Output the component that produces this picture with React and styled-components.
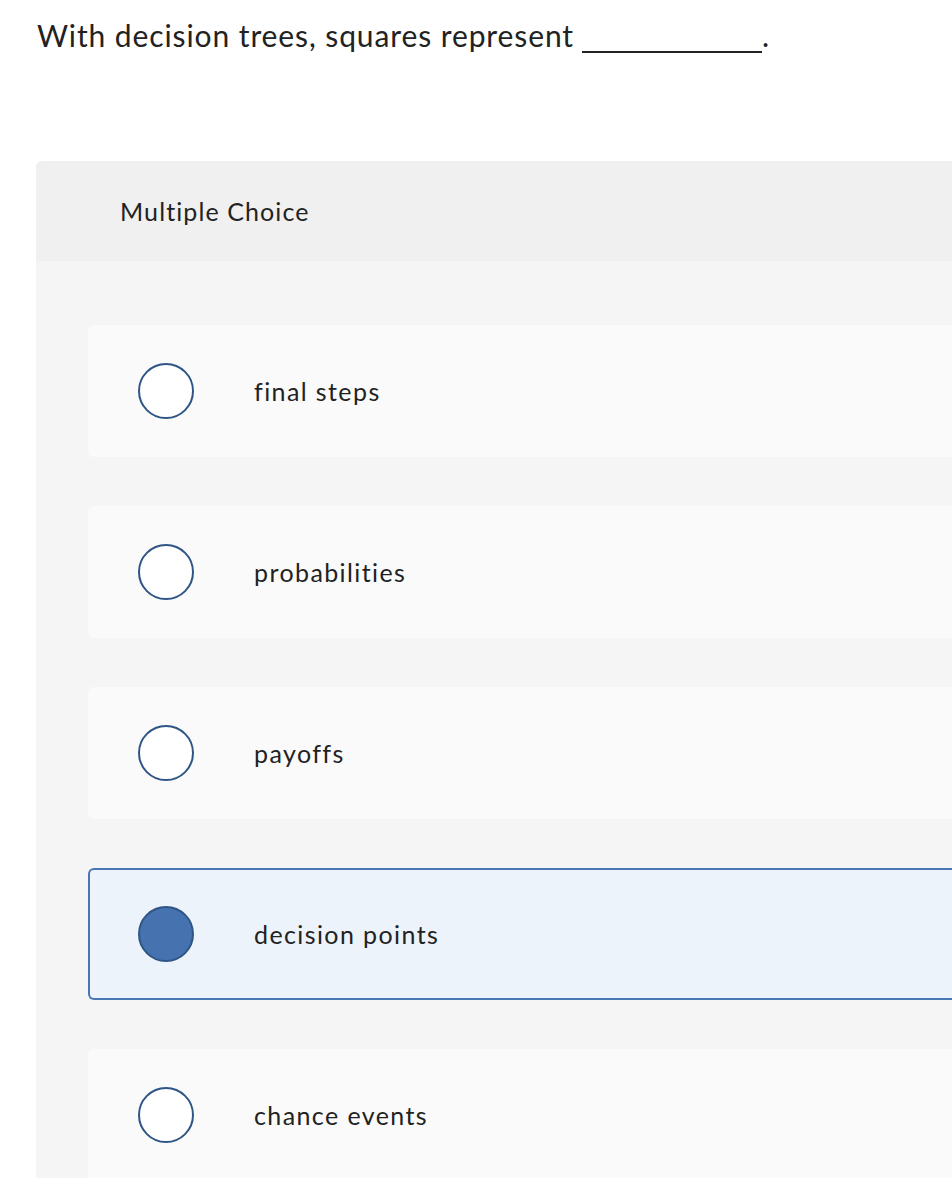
import React from 'react';
import styled, { createGlobalStyle } from 'styled-components';

const GlobalStyle = createGlobalStyle`
    html, body {
        margin: 0;
        padding: 0;
        background: #ffffff;
        overflow-x: hidden;
    }
    body {
        font-family: Lato, "Open Sans", Arial, sans-serif;
        font-variant-ligatures: none;
        color: #222222;
    }
`

const Page = styled.div`
    padding: 15px 0 0 36px;
    width: 1000px;
`

const Question = styled.p`
    margin: 0 0 0 1px;
    font-size: 30px;
    line-height: 40px;
    letter-spacing: 0.9px;
`

const Blank = styled.span`
    display: inline-block;
    width: 180px;
    height: 28px;
    border-bottom: 2px solid #222222;
    margin-left: 8px;
    vertical-align: -6px;
`

const Panel = styled.section`
    margin-top: 106px;
    border-radius: 6px 0 0 0;
    overflow: hidden;
    background: #f5f5f5;
`

const PanelHeader = styled.div`
    height: 100px;
    background: #f0f0f0;
    display: flex;
    align-items: center;
    padding-left: 84px;
    font-size: 25px;
    letter-spacing: 1.1px;
`

const OptionList = styled.div`
    padding: 64px 0 0 52px;
    display: flex;
    flex-direction: column;
    gap: 49px;
`

const Option = styled.label`
    display: flex;
    align-items: center;
    height: 132px;
    box-sizing: border-box;
    border-radius: 6px 0 0 6px;
    background: ${p => (p.$selected ? '#ecf3fb' : '#fafafa')};
    border: 2px solid ${p => (p.$selected ? '#4a77b4' : 'transparent')};
    border-right: none;
    padding-left: 48px;
    cursor: pointer;
`

const Radio = styled.span`
    width: 56px;
    height: 56px;
    box-sizing: border-box;
    border-radius: 50%;
    border: 2px solid #2e5585;
    background: ${p => (p.$selected ? '#4672b0' : '#ffffff')};
    flex-shrink: 0;
`

const OptionText = styled.span`
    margin-left: 60px;
    font-size: 25px;
    letter-spacing: 1.4px;
`

const options = ['final steps', 'probabilities', 'payoffs', 'decision points', 'chance events'];

const App = () => {
    const selected = 3;
    return (
        <Page>
            <GlobalStyle />
            <Question>
                With decision trees, squares represent<Blank />.
            </Question>
            <Panel>
                <PanelHeader>Multiple Choice</PanelHeader>
                <OptionList>
                    {options.map((opt, i) => (
                        <Option key={opt} $selected={i === selected}>
                            <Radio $selected={i === selected} />
                            <OptionText>{opt}</OptionText>
                        </Option>
                    ))}
                </OptionList>
            </Panel>
        </Page>
    );
};

export default App;
